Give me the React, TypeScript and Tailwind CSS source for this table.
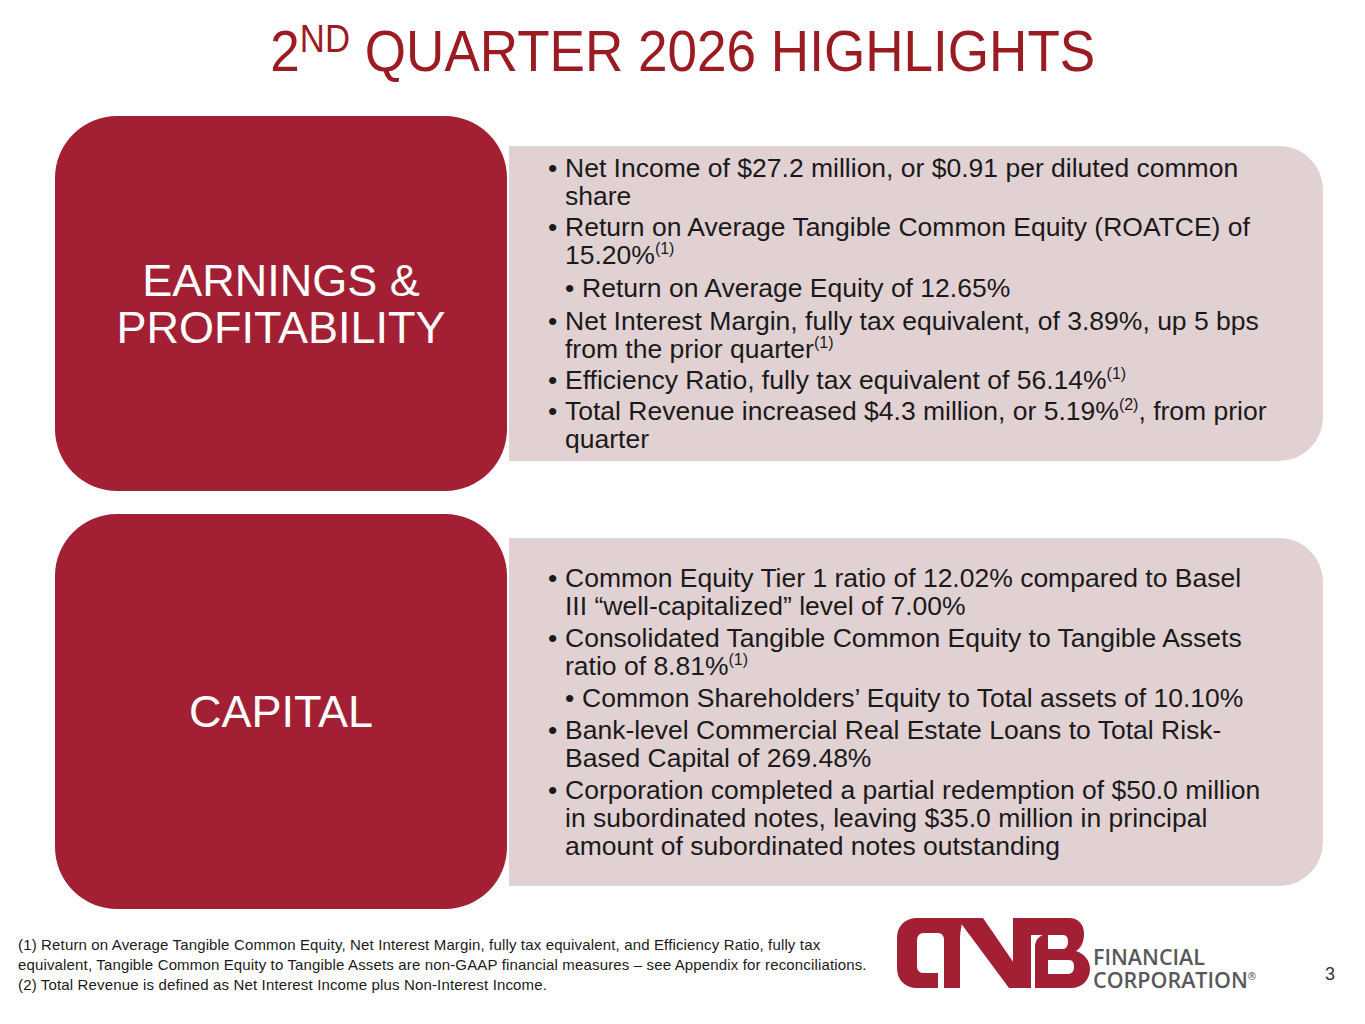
import React from 'react'

type Item = { text: React.ReactNode; sub?: boolean }

function Sup({ children }: { children: React.ReactNode }) {
    return <span className="relative -top-[10px] text-[16px] leading-none">{children}</span>
}

const earnings: Item[] = [
    { text: <>Net Income of $27.2 million, or $0.91 per diluted common<br />share</> },
    { text: <>Return on Average Tangible Common Equity (ROATCE) of<br />15.20%<Sup>(1)</Sup></> },
    { text: <>Return on Average Equity of 12.65%</>, sub: true },
    { text: <>Net Interest Margin, fully tax equivalent, of 3.89%, up 5 bps<br />from the prior quarter<Sup>(1)</Sup></> },
    { text: <>Efficiency Ratio, fully tax equivalent of 56.14%<Sup>(1)</Sup></> },
    { text: <>Total Revenue increased $4.3 million, or 5.19%<Sup>(2)</Sup>, from prior<br />quarter</> },
]

const capital: Item[] = [
    { text: <>Common Equity Tier 1 ratio of 12.02% compared to Basel<br />III “well-capitalized” level of 7.00%</> },
    { text: <>Consolidated Tangible Common Equity to Tangible Assets<br />ratio of 8.81%<Sup>(1)</Sup></> },
    { text: <>Common Shareholders’ Equity to Total assets of 10.10%</>, sub: true },
    { text: <>Bank-level Commercial Real Estate Loans to Total Risk-<br />Based Capital of 269.48%</> },
    { text: <>Corporation completed a partial redemption of $50.0 million<br />in subordinated notes, leaving $35.0 million in principal<br />amount of subordinated notes outstanding</> },
]

function Bullets({ items, tight }: { items: Item[]; tight?: boolean }) {
    return (
        <ul className={`flex flex-col ${tight ? 'gap-[3px]' : 'gap-[4px]'}`}>
            {items.map((it, i) => (
                <li
                    key={i}
                    className={`flex text-[26.5px] leading-[28px] text-[#1a1a1a] ${it.sub ? 'pl-[17px]' : ''} ${it.sub && tight ? 'my-[2px]' : ''}`}
                >
                    <span className="w-[17px] shrink-0">•</span>
                    <span>{it.text}</span>
                </li>
            ))}
        </ul>
    )
}

function Section({
    label,
    items,
    red,
    light,
    tight,
}: {
    label: React.ReactNode
    items: Item[]
    red: string
    light: string
    tight?: boolean
}) {
    return (
        <div className="flex items-center pl-[55px]">
            <div className={`w-[452px] ${red} shrink-0 rounded-[62px] bg-[#a31f34] flex items-center justify-center text-center text-white text-[45px] leading-[47px]`}>
                {label}
            </div>
            <div className={`ml-[2px] w-[814px] ${light} rounded-r-[44px] bg-[#e2d1d3] flex items-center pl-[39px]`}>
                <Bullets items={items} tight={tight} />
            </div>
        </div>
    )
}

// CNB wordmark
function Logo() {
    return (
        <svg width="193" height="70" viewBox="0 0 193 70" className="shrink-0">
            <g fill="#a31f34">
                <path d="M20 0 H66 C65 6 63 13 63 20 V70 H47 V22 C47 18 45 15 41 15 H27 C22 15 20 18 20 23 V48 C20 52 22 55 26 55 H41 V70 H20 C8 70 0 62 0 50 V20 C0 8 8 0 20 0 Z" />
                <path d="M60 0 H86 L134 70 H112 Z" />
                <path
                    fillRule="evenodd"
                    d="M116 0 H172 C182 0 187 7 187 16 C187 24 184 30 179 33 C188 36 193 43 193 51 C193 62 185 70 174 70 H138 V29 C138 23 141 19 146 17 H134 V70 H116 Z M151 17 H166 C170 17 171 20 171 24 C171 28 169 31 166 31 H151 Z M151 42 H172 C176 42 177 45 177 49 C177 53 175 56 171 56 H151 Z"
                />
            </g>
        </svg>
    )
}

export default function App() {
    return (
        <div className="w-[1365px] h-[1024px] bg-white font-['Liberation_Sans',Arial,sans-serif] flex flex-col overflow-hidden">
            {/* Title */}
            <h1 className="mt-[22px] h-[58px] text-center text-[58px] leading-[58px] text-[#9b1b22]">
                <span className="inline-block scale-x-[0.915] origin-center whitespace-nowrap">
                    2<span className="relative -top-[19px] text-[38px]">ND</span> QUARTER 2026 HIGHLIGHTS
                </span>
            </h1>

            <div className="mt-[36px] flex flex-col gap-[23px]">
                <Section
                    label={<>EARNINGS &amp;<br />PROFITABILITY</>}
                    items={earnings}
                    red="h-[375px]"
                    light="h-[315px]"
                    tight
                />
                <Section label="CAPITAL" items={capital} red="h-[395px]" light="h-[348px]" />
            </div>

            {/* Footer */}
            <div className="mt-[9px] flex items-start pl-[18px]">
                <div className="mt-[17px] w-[879px] text-[15px] leading-[20px] tracking-[0.15px] text-[#1a1a1a]">
                    (1) Return on Average Tangible Common Equity, Net Interest Margin, fully tax equivalent, and Efficiency Ratio, fully tax
                    <br />
                    equivalent, Tangible Common Equity to Tangible Assets are non-GAAP financial measures – see Appendix for reconciliations.
                    <br />
                    (2) Total Revenue is defined as Net Interest Income plus Non-Interest Income.
                </div>
                <Logo />
                <div className="ml-[3px] mt-[27px] flex flex-col font-['Open_Sans',sans-serif] font-semibold text-[21.5px] leading-[23px] text-[#58595b]">
                    <span>FINANCIAL</span>
                    <span>
                        CORPORATION<span className="relative -top-[8px] text-[10px]">®</span>
                    </span>
                </div>
                <div className="ml-auto mr-[30px] mt-[46px] text-[18px] leading-[20px] text-[#333]">3</div>
            </div>
        </div>
    )
}
